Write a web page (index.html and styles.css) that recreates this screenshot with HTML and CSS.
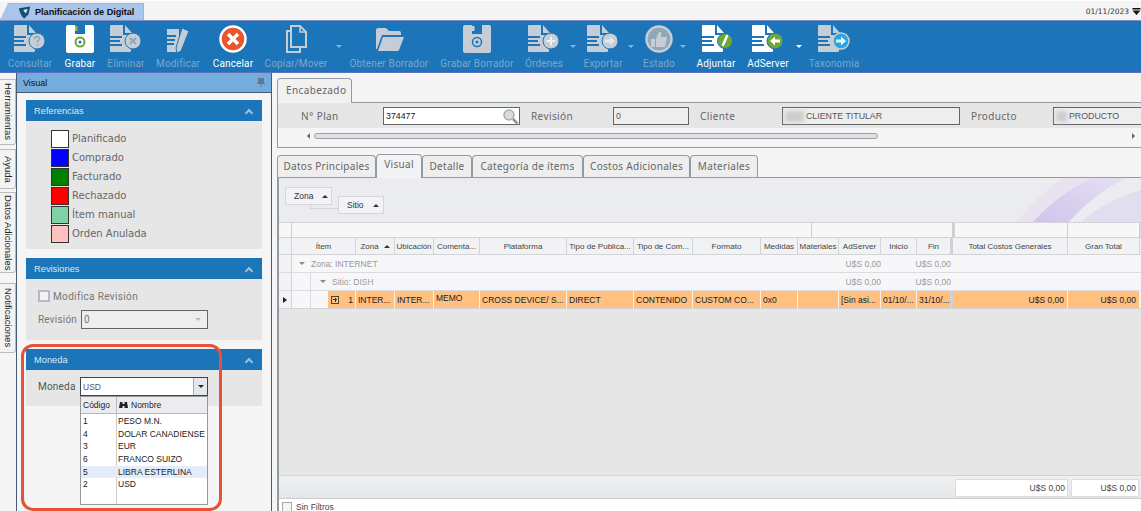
FILE: index.html
```html
<!DOCTYPE html>
<html lang="en">
<head>
  <meta charset="UTF-8">
  <title>Planificación de Digital</title>
  <link rel="stylesheet" href="styles.css">
</head>
<body>
  <svg class="defs" width="0" height="0">
    <symbol id="doc" viewBox="0 0 22 28">
      <path d="M1 0H13V10H21V26Q21 27 20 27H1Q0 27 0 26V1Q0 0 1 0Z" fill="currentColor"/>
      <path d="M15 0L22 8H15Z" fill="currentColor"/>
      <path d="M0 12H12M0 16H10M0 20H12" stroke="#1c75b8" stroke-width="2"/>
    </symbol>
    <symbol id="floppy" viewBox="0 0 28 28">
      <path d="M2 0H7V10H21V0H26Q28 0 28 2V26Q28 28 26 28H2Q0 28 0 26V2Q0 0 2 0Z" fill="currentColor"/>
      <rect x="7" y="0" width="14" height="10" fill="currentColor"/>
      <rect x="9" y="0" width="10" height="9" fill="#1c75b8"/>
    </symbol>
    <linearGradient id="petal" x1="0" y1="1" x2="1" y2="0">
      <stop offset="0" stop-color="#cfc4ec"/>
      <stop offset="1" stop-color="#e6dff2"/>
    </linearGradient>
  </svg>

  <!-- Top tab strip -->
  <div class="topbar">
    <div class="doc-tab">
      <svg class="doc-tab-icon" width="14" height="13" viewBox="0 0 16 14"><path d="M1 2L14 0L12 9L7 14Q2 9 1 2Z" fill="#14506f"/><path d="M6 4L11 3L9 8Z" fill="#e8f2f8"/></svg>
      <span>Planificación de Digital</span>
    </div>
    <div class="topbar-date">
      <span>01/11/2023</span>
      <svg width="9" height="7" viewBox="0 0 8 7"><path d="M0 0H8V1.500H0ZM0 2.500H8L4 7Z" fill="#111"/></svg>
    </div>
  </div>

  <!-- Toolbar -->
  <div class="toolbar">
    <div class="tool off">
      <svg class="tool-icon" width="36" height="30" viewBox="0 0 36 30"><use href="#doc" x="2" y="1" width="22" height="28"/><circle cx="25" cy="17" r="8" fill="currentColor" stroke="#1c75b8"/><path d="M22.500 15Q23 12.500 25.200 12.500Q27.800 12.800 27.500 15Q27.200 16.300 25.500 17V18.500M25.500 20V21.500" stroke="#8fa7b8" stroke-width="1.500" fill="none"/></svg>
      <span>Consultar</span>
    </div>
    <div class="tool on">
      <svg class="tool-icon" width="36" height="30" viewBox="0 0 36 30"><use href="#floppy" x="4" y="1" width="28" height="28"/><rect x="13" y="2" width="2.500" height="5" fill="#8bc34a"/><circle cx="18" cy="18" r="4.500" fill="none" stroke="#6aa83a" stroke-width="2"/><circle cx="18" cy="18" r="1.500" fill="#1c75b8"/></svg>
      <span>Grabar</span>
    </div>
    <div class="tool off">
      <svg class="tool-icon" width="36" height="30" viewBox="0 0 36 30"><use href="#doc" x="2" y="1" width="22" height="28"/><circle cx="25" cy="17" r="8" fill="currentColor" stroke="#1c75b8"/><path d="M22 14L28 20M28 14L22 20" stroke="#8fa7b8" stroke-width="2"/></svg>
      <span>Eliminar</span>
    </div>
    <div class="tool off">
      <svg class="tool-icon" width="36" height="30" viewBox="0 0 36 30"><path d="M7 5H19V28H7Z" fill="currentColor"/><path d="M7 12H16M7 16H15M7 20H14" stroke="#1c75b8" stroke-width="2"/><path d="M22 4L29 7L21 27L17 29L16 24Z" fill="currentColor" stroke="#1c75b8"/></svg>
      <span>Modificar</span>
    </div>
    <div class="tool on">
      <svg class="tool-icon" width="36" height="30" viewBox="0 0 36 30"><circle cx="18" cy="15" r="12.500" fill="#e9552c" stroke="#fff" stroke-width="2.500"/><path d="M13 10L23 20M23 10L13 20" stroke="#fff" stroke-width="3.500"/></svg>
      <span>Cancelar</span>
    </div>
    <div class="tool off">
      <svg class="tool-icon" width="36" height="30" viewBox="0 0 36 30"><path d="M13 2H22L28 8V23H13Z" fill="none" stroke="currentColor" stroke-width="2"/><path d="M13 7H9V28H22V23" fill="none" stroke="currentColor" stroke-width="2"/><path d="M22 2V8H28" fill="none" stroke="currentColor" stroke-width="1.500"/></svg>
      <span>Copiar/Mover</span>
    </div>
    <div class="tool-arrow off"></div>
    <div class="tool off">
      <svg class="tool-icon" width="36" height="30" viewBox="0 0 36 30"><path d="M5 6Q5 4 7 4H15L18 7H28Q30 7 30 9V11H11L6 25H5Z" fill="currentColor"/><path d="M12 13H33L28 26Q28 27 26 27H7Z" fill="currentColor"/></svg>
      <span>Obtener Borrador</span>
    </div>
    <div class="tool off">
      <svg class="tool-icon" width="36" height="30" viewBox="0 0 36 30"><use href="#floppy" x="4" y="1" width="28" height="28"/><rect x="13" y="2" width="2.500" height="5" fill="currentColor"/><circle cx="18" cy="18" r="4.500" fill="none" stroke="#1c75b8" stroke-width="1.500"/><circle cx="18" cy="18" r="1.500" fill="#1c75b8"/></svg>
      <span>Grabar Borrador</span>
    </div>
    <div class="tool off">
      <svg class="tool-icon" width="36" height="30" viewBox="0 0 36 30"><use href="#doc" x="2" y="1" width="22" height="28"/><circle cx="25" cy="17" r="8" fill="currentColor" stroke="#1c75b8"/><path d="M25 12.500V21.500M20.500 17H29.500" stroke="#eef1f3" stroke-width="2"/></svg>
      <span>Órdenes</span>
    </div>
    <div class="tool-arrow off"></div>
    <div class="tool off">
      <svg class="tool-icon" width="36" height="30" viewBox="0 0 36 30"><use href="#doc" x="2" y="1" width="22" height="28"/><circle cx="25" cy="17" r="8" fill="currentColor" stroke="#1c75b8"/><path d="M20 15.500H25V12.500L30 17L25 21.500V18.500H20Z" fill="#e2e7ea"/></svg>
      <span>Exportar</span>
    </div>
    <div class="tool-arrow off"></div>
    <div class="tool off">
      <svg class="tool-icon" width="36" height="30" viewBox="0 0 36 30"><circle cx="18" cy="15" r="12.500" fill="#8fa7b8" stroke="currentColor" stroke-width="2.500"/><path d="M10 15H14V23H10ZM15 15L18 8H20L20 13H26L24 23H15Z" fill="currentColor"/></svg>
      <span>Estado</span>
    </div>
    <div class="tool-arrow off"></div>
    <div class="tool on">
      <svg class="tool-icon" width="36" height="30" viewBox="0 0 36 30"><use href="#doc" x="4" y="1" width="22" height="28"/><circle cx="27" cy="17" r="7.500" fill="#6aa83a" stroke="#1c75b8"/><path d="M29 12L25 21" stroke="#fff" stroke-width="2.500" stroke-linecap="round"/></svg>
      <span>Adjuntar</span>
    </div>
    <div class="tool on">
      <svg class="tool-icon" width="36" height="30" viewBox="0 0 36 30"><use href="#doc" x="2" y="1" width="22" height="28"/><circle cx="25" cy="17" r="8" fill="#6aa83a" stroke="#1c75b8"/><path d="M30 15.500H25V12.500L20 17L25 21.500V18.500H30Z" fill="#fff"/></svg>
      <span>AdServer</span>
    </div>
    <div class="tool-arrow on"></div>
    <div class="tool off">
      <svg class="tool-icon" width="36" height="30" viewBox="0 0 36 30"><use href="#doc" x="2" y="1" width="22" height="28"/><circle cx="25" cy="17" r="8" fill="#2aa4dc" stroke="#c5ced6" stroke-width="1.500"/><path d="M20 15.500H25V12.500L30 17L25 21.500V18.500H20Z" fill="#e8f4fa"/></svg>
      <span>Taxonomia</span>
    </div>
  </div>

  <div class="workspace">
    <!-- Vertical side tabs -->
    <div class="side-tabs">
      <div class="side-tab tab-tools">Herramientas</div>
      <div class="side-tab tab-help">Ayuda</div>
      <div class="side-tab tab-data">Datos Adicionales</div>
      <div class="side-tab tab-notes">Notificaciones</div>
    </div>

    <!-- Left panel -->
    <div class="left-panel">
      <div class="panel-title">
        <span>Visual</span>
        <svg width="8" height="9" viewBox="0 0 8 9"><path d="M1 0H7V5H8V6H4.500V9H3.500V6H0V5H1Z" fill="#5a7a98"/></svg>
      </div>
      <div class="panel-body">
        <div class="section">
          <div class="section-head"><span>Referencias</span><i class="chevron"></i></div>
          <div class="section-body legend">
            <div class="legend-row"><i class="swatch sw-white"></i>Planificado</div>
            <div class="legend-row"><i class="swatch sw-blue"></i>Comprado</div>
            <div class="legend-row"><i class="swatch sw-green"></i>Facturado</div>
            <div class="legend-row"><i class="swatch sw-red"></i>Rechazado</div>
            <div class="legend-row"><i class="swatch sw-mint"></i>Ítem manual</div>
            <div class="legend-row"><i class="swatch sw-pink"></i>Orden Anulada</div>
          </div>
        </div>

        <div class="section">
          <div class="section-head"><span>Revisiones</span><i class="chevron"></i></div>
          <div class="section-body revisions">
            <div class="check-row"><i class="check"></i><em>Modifica Revisión</em></div>
            <div class="rev-row">
              <span>Revisión</span>
              <div class="rev-select">0<i class="caret-off"></i></div>
            </div>
          </div>
        </div>

        <div class="section">
          <div class="section-head"><span>Moneda</span><i class="chevron"></i></div>
          <div class="section-body currency">
            <span>Moneda</span>
            <div class="combo">
              <div class="combo-box">USD<b class="combo-btn"><i></i></b></div>
              <div class="combo-list">
                <div class="combo-head">
                  <span>Código</span>
                  <span class="combo-name"><svg width="9" height="8" viewBox="0 0 9 8"><path d="M1 1H3.500V3H5.500V1H8L9 7H5.500V5H3.500V7H0Z" fill="#222"/></svg>Nombre</span>
                </div>
                <div class="combo-rows">
                  <div class="combo-row"><span>1</span><span>PESO M.N.</span></div>
                  <div class="combo-row"><span>4</span><span>DOLAR CANADIENSE</span></div>
                  <div class="combo-row"><span>3</span><span>EUR</span></div>
                  <div class="combo-row"><span>6</span><span>FRANCO SUIZO</span></div>
                  <div class="combo-row hover"><span>5</span><span>LIBRA ESTERLINA</span></div>
                  <div class="combo-row"><span>2</span><span>USD</span></div>
                </div>
              </div>
            </div>
          </div>
        </div>
      </div>
      <div class="highlight"></div>
    </div>

    <!-- Main area -->
    <div class="main">
      <div class="head-tabs"><div class="head-tab">Encabezado</div></div>
      <div class="head-panel">
        <div class="head-fields">
          <label>N° Plan</label>
          <div class="field plan">374477
            <svg width="17" height="17" viewBox="0 0 17 17"><circle cx="7" cy="7" r="5" fill="#d8dcdc" stroke="#a9b0b0" stroke-width="1.500"/><path d="M11 11L15.500 15.500" stroke="#8f9696" stroke-width="2.500"/></svg>
          </div>
          <label class="pad">Revisión</label>
          <div class="field">0</div>
          <label class="pad">Cliente</label>
          <div class="field"><i class="smudge"></i>CLIENTE TITULAR</div>
          <label class="pad">Producto</label>
          <div class="field open-end"><i class="smudge short"></i>PRODUCTO</div>
        </div>
        <div class="head-scroll">
          <i class="arrow-left"></i>
          <div class="scroll-track"><div class="scroll-thumb"></div></div>
          <i class="arrow-right"></i>
        </div>
      </div>

      <div class="tabs">
        <div class="tab">Datos Principales</div>
        <div class="tab active">Visual</div>
        <div class="tab">Detalle</div>
        <div class="tab">Categoría de ítems</div>
        <div class="tab">Costos Adicionales</div>
        <div class="tab">Materiales</div>
      </div>

      <div class="grid-panel">
        <div class="group-area">
          <svg class="flourish" width="150" height="44" viewBox="0 0 150 44"><path d="M26 44Q45 18 72 0H100Q70 20 58 44Z" fill="#eae2f1"/><path d="M42 44Q68 15 102 0H135Q100 18 78 44Z" fill="url(#petal)"/><path d="M90 44Q115 22 150 12V44Z" fill="#e2def0"/></svg>
          <div class="group-chip chip-zona">Zona<i class="sort-up"></i></div>
          <div class="group-link"></div>
          <div class="group-chip chip-sitio">Sitio<i class="sort-up"></i></div>
        </div>

        <div class="band">
          <div class="band-cell"></div>
          <div class="band-cell"></div>
          <div class="band-cell"></div>
          <div class="band-cell fixed"></div>
          <div class="band-cell"></div>
        </div>

        <div class="cols header-row">
          <div class="hcell"></div>
          <div class="hcell">Ítem</div>
          <div class="hcell">Zona<i class="sort-up"></i></div>
          <div class="hcell">Ubicación</div>
          <div class="hcell">Comenta...</div>
          <div class="hcell">Plataforma</div>
          <div class="hcell">Tipo de Publica...</div>
          <div class="hcell">Tipo de Com...</div>
          <div class="hcell">Formato</div>
          <div class="hcell">Medidas</div>
          <div class="hcell">Materiales</div>
          <div class="hcell">AdServer</div>
          <div class="hcell">Inicio</div>
          <div class="hcell fin">Fin</div>
          <div class="hcell">Total Costos Generales</div>
          <div class="hcell">Gran Total</div>
        </div>

        <div class="cols group-row">
          <div class="ind"></div>
          <div class="group-label"><i class="tree-down"></i>Zona: INTERNET</div>
          <div class="sum col-ad">U$S 0,00</div>
          <div class="sum col-fin">U$S 0,00</div>
        </div>
        <div class="cols group-row sitio">
          <div class="ind"></div>
          <div class="group-label nested"><i class="tree-down"></i>Sitio: DISH</div>
          <div class="sum col-ad">U$S 0,00</div>
          <div class="sum col-fin">U$S 0,00</div>
        </div>
        <div class="cols data-row">
          <div class="ind"><i class="row-mark"></i></div>
          <div class="item-cell">
            <div class="item-indent"></div>
            <div class="item-val"><i class="plus"></i><span>1</span></div>
          </div>
          <div class="dcell">INTER...</div>
          <div class="dcell">INTER...</div>
          <div class="dcell memo">MEMO</div>
          <div class="dcell">CROSS DEVICE/ S...</div>
          <div class="dcell">DIRECT</div>
          <div class="dcell">CONTENIDO</div>
          <div class="dcell">CUSTOM CO...</div>
          <div class="dcell">0x0</div>
          <div class="dcell"></div>
          <div class="dcell">[Sin asi...</div>
          <div class="dcell">01/10/...</div>
          <div class="dcell fin">31/10/...</div>
          <div class="dcell right">U$S 0,00</div>
          <div class="dcell right">U$S 0,00</div>
        </div>

        <div class="grid-empty"></div>

        <div class="grid-footer">
          <div class="total total-a">U$S 0,00</div>
          <div class="total total-b">U$S 0,00</div>
        </div>
        <div class="filter-row"><i class="filter-check"></i>Sin Filtros</div>
      </div>
    </div>
  </div>
</body>
</html>
```

FILE: styles.css
```css
* {
  box-sizing: border-box;
}

html, body {
  margin: 0;
  padding: 0;
  height: 511px;
  overflow: hidden;
}

body {
  width: 1141px;
  display: flex;
  flex-direction: column;
  background: #f5f5f5;
  font-family: "DejaVu Sans", sans-serif;
  font-size: 10px;
  color: #555;
}

i, em {
  font-style: normal;
}

.defs {
  position: absolute;
}

/* top strip */
.topbar {
  height: 20px;
  padding-top: 2px;
  background: #f4f4f4;
  border-top: 1px solid #fff;
  display: flex;
  justify-content: space-between;
}

.doc-tab {
  width: 144px;
  padding-left: 17px;
  display: flex;
  align-items: center;
  gap: 3px;
  background: #a9c5ea;
  border: 1px solid #9db4d4;
  border-bottom: 0;
  clip-path: polygon(8px 0, 100% 0, 100% 100%, 0 100%);
  font-family: "Liberation Sans", sans-serif;
  font-size: 9.200px;
  font-weight: bold;
  color: #111;
  letter-spacing: -0.05px;
  white-space: nowrap;
}

.topbar-date {
  display: flex;
  align-items: center;
  gap: 3px;
  font-size: 7.500px;
  color: #333;
}

/* toolbar */
.toolbar {
  height: 53px;
  padding-left: 5px;
  display: grid;
  grid-template-columns: 50px 50px 42px 62px 48px 78px 8px 92px 84px 50px 10px 48px 12px 40px 12px 50px 54px 8px 62px;
  background: #1c75b8;
  border-top: 1px solid #7f8cc4;
  border-bottom: 1px solid #5f6fc0;
}

.tool {
  display: flex;
  flex-direction: column;
  align-items: center;
  padding-top: 3px;
  font-family: Roboto, sans-serif;
  font-size: 10px;
  letter-spacing: 0.15px;
  white-space: nowrap;
}

.tool span {
  margin-top: 4px;
  line-height: 12px;
}

.tool-icon {
  display: block;
}

.tool.off {
  color: #c5ced6;
}

.tool.off span {
  color: #7fa6c8;
}

.tool.on {
  color: #fff;
}

.tool-arrow {
  position: relative;
}

.tool-arrow::after {
  content: "";
  position: absolute;
  left: 1px;
  top: 24px;
  border: 3px solid transparent;
  border-top-color: #8fb2d0;
}

.tool-arrow.on::after {
  border-top-color: #fff;
}

/* workspace */
.workspace {
  flex: 1;
  display: flex;
  min-height: 0;
}

.side-tabs {
  width: 16px;
  padding-top: 6px;
  display: flex;
  flex-direction: column;
}

.side-tab {
  width: 16px;
  writing-mode: vertical-rl;
  text-align: center;
  font-family: "Liberation Sans", sans-serif;
  font-size: 9.500px;
  color: #222;
  background: #f3f3f3;
  border: 1px solid #bbb;
  border-left: 0;
  border-radius: 0 0 3px 0;
  line-height: 14px;
  white-space: nowrap;
}

.tab-tools {
  height: 66px;
}

.tab-help {
  height: 40px;
  margin-top: 4px;
}

.tab-data {
  height: 81px;
  margin-top: 3px;
}

.tab-notes {
  height: 70px;
  margin-top: 10px;
}

/* left panel */
.left-panel {
  position: relative;
  width: 256px;
  display: flex;
  flex-direction: column;
  border-left: 1px solid #4a5a70;
  border-right: 1px solid #4a5a70;
  background: #f5f5f5;
}

.panel-title {
  height: 20px;
  padding: 0 6px;
  display: flex;
  justify-content: space-between;
  align-items: center;
  background: #76acdb;
  border-bottom: 1px solid #3d5a78;
  font-family: "Liberation Sans", sans-serif;
  font-size: 9px;
  color: #111;
}

.panel-body {
  padding: 7px 9px 0;
}

.section {
  margin-bottom: 9px;
}

.section-head {
  height: 21px;
  padding: 0 10px 0 8px;
  display: flex;
  justify-content: space-between;
  align-items: center;
  background: #1c75b8;
  font-family: "Liberation Sans", sans-serif;
  font-size: 9.300px;
  color: #dbe9f4;
}

.chevron {
  width: 6px;
  height: 6px;
  margin-top: 4px;
  border-top: 2px solid #9dbfd8;
  border-left: 2px solid #9dbfd8;
  transform: rotate(45deg);
}

.section-body {
  background: #e6e6e6;
}

.legend {
  height: 128px;
  padding: 8px 0 0 25px;
}

.legend-row {
  height: 19px;
  display: flex;
  align-items: center;
  gap: 3px;
  color: #666;
}

.swatch {
  width: 18px;
  height: 18px;
  border: 1px solid #333;
}

.sw-white { background: #fff; }
.sw-blue { background: #0000ff; }
.sw-green { background: #008000; }
.sw-red { background: #ff0000; }
.sw-mint { background: #80d0a8; }
.sw-pink { background: #ffc0c0; }

.revisions {
  height: 61px;
  padding: 11px 0 0 12px;
  font-family: Roboto, sans-serif;
  color: #777;
}

.check-row {
  display: flex;
  align-items: center;
  gap: 3px;
  letter-spacing: 0.35px;
}

.check {
  width: 12px;
  height: 12px;
  background: #f2f2f2;
  border: 2px solid #b8b8c4;
}

.rev-row {
  margin-top: 8px;
  display: flex;
  align-items: center;
  gap: 4px;
  letter-spacing: 0.2px;
}

.rev-select {
  width: 127px;
  height: 19px;
  padding-left: 2px;
  display: flex;
  justify-content: space-between;
  align-items: center;
  background: #eee;
  border: 1px solid #666;
}

.caret-off {
  margin: 3px 6px 0 0;
  border: 3px solid transparent;
  border-top-color: #bbb;
}

.currency {
  height: 36px;
  padding: 7px 0 0 12px;
  display: flex;
  font-family: Roboto, sans-serif;
  color: #555;
}

.currency > span {
  width: 42px;
  line-height: 19px;
  letter-spacing: 0.2px;
}

.combo {
  position: relative;
  width: 128px;
}

.combo-box {
  height: 19px;
  padding-left: 2px;
  display: flex;
  justify-content: space-between;
  align-items: center;
  background: #fff;
  border: 1px solid #444;
  font-family: "Liberation Sans", sans-serif;
  font-size: 8.500px;
}

.combo-btn {
  width: 14px;
  height: 17px;
  display: flex;
  justify-content: center;
  align-items: center;
  background: #e4e8ee;
  border-left: 1px solid #aaa;
}

.combo-btn i {
  margin-top: 3px;
  border: 3px solid transparent;
  border-top-color: #222;
}

.combo-list {
  position: absolute;
  left: 0;
  top: 19px;
  width: 128px;
  height: 109px;
  background: #fff;
  border: 1px solid #999;
  font-family: "Liberation Sans", sans-serif;
  font-size: 8.500px;
  color: #222;
  white-space: nowrap;
}

.combo-head {
  height: 17px;
  display: grid;
  grid-template-columns: 35px 1fr;
  background: #ececf0;
  border-bottom: 1px solid #bbb;
}

.combo-head span {
  padding-left: 2px;
  line-height: 16px;
}

.combo-name {
  display: flex;
  align-items: center;
  gap: 3px;
  border-left: 1px solid #bbb;
}

.combo-rows {
  height: 90px;
  background: linear-gradient(#ccc, #ccc) 35px 0 / 1px 100% no-repeat;
  padding-top: 1px;
}

.combo-row {
  height: 12.700px;
  display: grid;
  grid-template-columns: 35px 1fr;
  line-height: 12px;
}

.combo-row span {
  padding-left: 2px;
}

.combo-row.hover {
  background: #e4ecfa;
}

.highlight {
  position: absolute;
  left: 4px;
  top: 271px;
  width: 201px;
  height: 167px;
  border: 3px solid #e8503a;
  border-radius: 12px;
  pointer-events: none;
}

/* main */
.main {
  flex: 1;
  min-width: 0;
  padding: 5px 0 0 5px;
  display: flex;
  flex-direction: column;
  font-family: "Noto Sans", sans-serif;
  letter-spacing: 0.4px;
}

.head-tabs {
  height: 24px;
  position: relative;
  z-index: 1;
}

.head-tab {
  width: 75px;
  height: 25px;
  padding-left: 8px;
  background: #f1f1f1;
  border: 1px solid #8f9ca4;
  border-bottom: 0;
  border-radius: 4px 4px 0 0;
  line-height: 22px;
  color: #666;
}

.head-panel {
  height: 46px;
  background: #f5f5f5;
  border: 1px solid #8f9ca4;
  border-right: 0;
}

.head-fields {
  height: 25px;
  padding: 4px 0 0 23px;
  display: grid;
  grid-template-columns: 82px 137px 93px 76px 93px 178px 93px 88px;
  background: #e6e6e6;
}

.head-fields label {
  line-height: 18px;
  color: #666;
}

.head-fields .pad {
  padding-left: 11px;
}

.field {
  height: 18px;
  padding-left: 2px;
  display: flex;
  align-items: center;
  background: #eee;
  border: 1px solid #666;
  font-family: "Liberation Sans", sans-serif;
  font-size: 8.800px;
  letter-spacing: 0;
  white-space: nowrap;
}

.field.plan {
  justify-content: space-between;
  background: #fff;
  color: #222;
}

.field.open-end {
  border-right: 0;
}

.smudge {
  width: 19px;
  height: 11px;
  margin-right: 2px;
  background: #ccc;
  filter: blur(2px);
}

.smudge.short {
  width: 11px;
}

.head-scroll {
  height: 15px;
  padding: 0 6px 0 29px;
  display: flex;
  align-items: center;
  gap: 4px;
}

.arrow-left {
  border: 3px solid transparent;
  border-right-color: #666;
  border-left: 0;
}

.arrow-right {
  border: 3px solid transparent;
  border-left-color: #666;
  border-right: 0;
}

.scroll-track {
  flex: 1;
}

.scroll-thumb {
  width: 564px;
  height: 6px;
  background: #dfe1e4;
  border: 1px solid #9aa2a8;
  border-radius: 3px;
}

.tabs {
  height: 22px;
  margin-top: 7px;
  display: grid;
  grid-template-columns: 99px 46px 50px 111px 107px 68px;
  grid-template-rows: 22px;
  align-items: end;
  letter-spacing: 0.3px;
}

.tab {
  height: 22px;
  text-align: center;
  line-height: 21px;
  color: #666;
  background: #eee;
  border: 1px solid #8f9ca4;
  border-bottom: 0;
  border-radius: 4px 4px 0 0;
  white-space: nowrap;
}

.tab.active {
  height: 24px;
  line-height: 19px;
  margin-bottom: -1px;
  background: #f3f3f5;
  position: relative;
  z-index: 1;
}

.grid-panel {
  flex: 1;
  min-height: 0;
  display: flex;
  flex-direction: column;
  border-left: 2px solid #8f9ca4;
  border-top: 1px solid #8f9ca4;
  background: #e6e6e6;
  font-family: "Liberation Sans", sans-serif;
  font-size: 8.500px;
  letter-spacing: 0;
  color: #444;
}

.group-area {
  position: relative;
  height: 44px;
  background: #ebecf0;
}

.flourish {
  position: absolute;
  right: 0;
  top: 0;
}

.group-chip {
  position: absolute;
  height: 18px;
  display: flex;
  align-items: center;
  padding-left: 8px;
  background: #f2f3f6;
  border: 1px solid #d6d6da;
  color: #333;
}

.chip-zona {
  left: 6px;
  top: 9px;
  width: 47px;
}

.chip-sitio {
  left: 59px;
  top: 18px;
  width: 46px;
}

.group-link {
  position: absolute;
  left: 31px;
  top: 27px;
  width: 29px;
  height: 4px;
  border: 1px solid #d6d6da;
  border-top: 0;
}

.sort-up {
  margin-left: 9px;
  border: 3px solid transparent;
  border-top: 0;
  border-bottom: 3px solid #333;
}

.band {
  height: 15px;
  display: grid;
  grid-template-columns: 13px 520px 141px 115px 72px;
  background: #d8d8dc;
  border-top: 1px solid #d4d4d8;
}

.band-cell {
  background: #f7f7f8;
  border-right: 1px solid #cfcfd4;
}

.band-cell.fixed {
  border-left: 2px solid #cfcfd4;
}

.cols {
  display: grid;
  grid-template-columns: 13px 64px 39px 39px 46px 87px 67px 59px 68px 37px 41px 42px 36px 36px 115px 72px;
}

.header-row {
  height: 18px;
  font-size: 8px;
  background: #f1f2f4;
  border-top: 1px solid #d4d4d8;
  border-bottom: 1px solid #d4d4d8;
}

.hcell {
  display: flex;
  align-items: center;
  justify-content: center;
  border-right: 1px solid #d4d4d8;
  white-space: nowrap;
  overflow: hidden;
}

.hcell.fin {
  border-right: 3px solid #d0d0d6;
}

.hcell .sort-up {
  margin-left: 5px;
}

.group-row {
  height: 18px;
  background: #f7f7f9;
  border-bottom: 1px solid #dcdce0;
  color: #999;
}

.ind {
  display: flex;
  align-items: center;
  justify-content: center;
  background: #f3f3f5;
  border-right: 1px solid #d4d4d8;
}

.group-label {
  grid-column: 2 / 12;
  padding-left: 7px;
  display: flex;
  align-items: center;
  gap: 6px;
}

.group-label.nested {
  margin-left: 18px;
  padding-left: 9px;
  border-left: 1px solid #dcdce0;
}

.tree-down {
  border: 3px solid transparent;
  border-bottom: 0;
  border-top: 3px solid #888;
}

.sum {
  display: flex;
  align-items: center;
  justify-content: flex-end;
  white-space: nowrap;
}

.col-ad {
  grid-column: 12;
}

.col-fin {
  grid-column: 14;
  padding-right: 2px;
}

.data-row {
  height: 18px;
  background: #f7f7f9;
  border-bottom: 1px solid #d4d4d8;
  color: #222;
}

.row-mark {
  border: 3px solid transparent;
  border-right: 0;
  border-left: 4px solid #222;
}

.item-cell {
  display: flex;
}

.item-indent {
  margin-left: 18px;
  flex: 0 0 18px;
  border-left: 1px solid #dcdce0;
}

.item-val {
  flex: 1;
  padding: 0 2px 0 3px;
  display: flex;
  align-items: center;
  justify-content: space-between;
  background: #ffc080;
  border-right: 1px solid #fff0e0;
}

.plus {
  width: 8px;
  height: 8px;
  border: 1px solid #444;
  background: linear-gradient(#333, #333) center / 4px 1px no-repeat, linear-gradient(#333, #333) center / 1px 4px no-repeat;
}

.dcell {
  padding-left: 2px;
  display: flex;
  align-items: center;
  background: #ffc080;
  border-right: 1px solid #fff0e0;
  white-space: nowrap;
  overflow: hidden;
}

.dcell.fin {
  border-right: 3px solid #d0d0d6;
}

.dcell.memo {
  padding-bottom: 3px;
}

.dcell.right {
  justify-content: flex-end;
  padding-right: 3px;
}

.grid-empty {
  flex: 1;
  background: #e6e6e6;
}

.grid-footer {
  height: 23px;
  padding: 3px 2px 0 0;
  display: flex;
  justify-content: flex-end;
  gap: 3px;
  background: linear-gradient(#eef0f2, #e4e6e8);
  border-top: 1px solid #d4d4d8;
}

.total {
  height: 18px;
  padding-right: 2px;
  text-align: right;
  line-height: 17px;
  background: #fff;
  border: 1px solid #dcdce0;
}

.total-a {
  width: 113px;
}

.total-b {
  width: 68px;
}

.filter-row {
  height: 13px;
  padding: 3px 0 0 3px;
  display: flex;
  align-items: center;
  gap: 4px;
  background: #fff;
  border-top: 1px solid #ccc;
  overflow: hidden;
}

.filter-check {
  width: 10px;
  height: 10px;
  flex: none;
  background: #f5f5f5;
  border: 1px solid #aaa;
}
```
